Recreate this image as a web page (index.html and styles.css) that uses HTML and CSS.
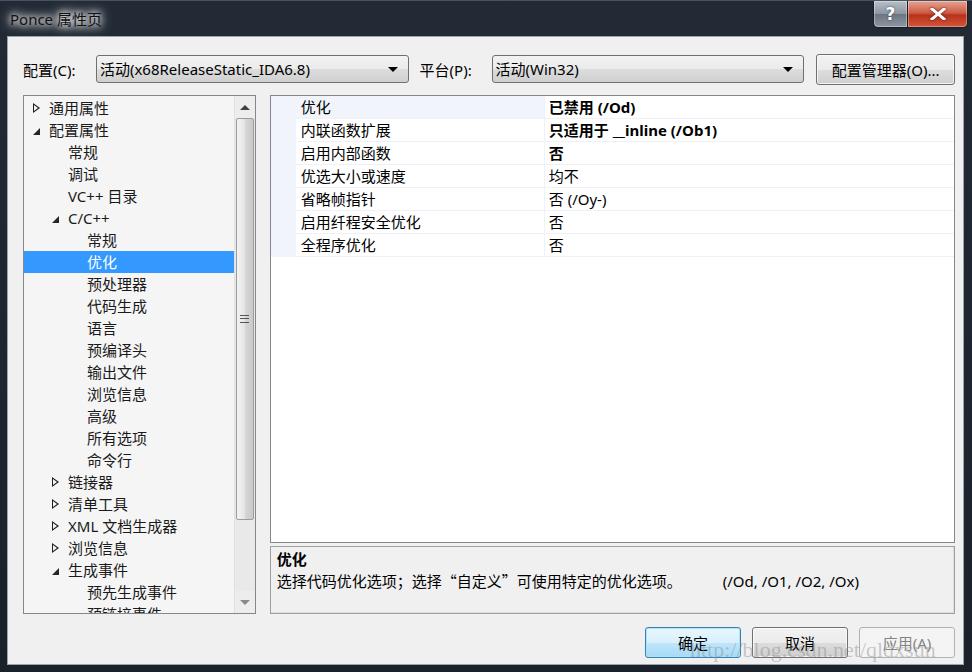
FILE: index.html
```html
<!DOCTYPE html>
<html lang="zh-CN">
<head>
  <meta charset="UTF-8" />
  <title>Ponce 属性页</title>
  <link rel="stylesheet" href="styles.css">
</head>
<body>
  <div class="window">
    <div class="titlebar">
      <span class="title">Ponce 属性页</span>
      <div class="caption-btns">
        <span class="cap help">?</span>
        <span class="cap close">
          <svg width="16" height="12" viewBox="0 0 16 12"><path d="M2 1 L14 11 M14 1 L2 11" stroke="#fff" stroke-width="3" stroke-linecap="square"/></svg>
        </span>
      </div>
    </div>

    <div class="client">
      <div class="toolbar">
        <label class="field-label">配置(C):</label>
        <div class="combo">活动(x68ReleaseStatic_IDA6.8)<span class="combo-arrow"></span></div>
        <label class="field-label platform">平台(P):</label>
        <div class="combo">活动(Win32)<span class="combo-arrow"></span></div>
        <button class="btn manager">配置管理器(O)...</button>
      </div>

      <div class="main">
        <div class="tree">
          <div class="tree-items">
            <div class="node lv0"><span class="tw closed"></span>通用属性</div>
            <div class="node lv0"><span class="tw open"></span>配置属性</div>
            <div class="node lv1"><span class="tw"></span>常规</div>
            <div class="node lv1"><span class="tw"></span>调试</div>
            <div class="node lv1"><span class="tw"></span>VC++ 目录</div>
            <div class="node lv1"><span class="tw open"></span>C/C++</div>
            <div class="node lv2"><span class="tw"></span>常规</div>
            <div class="node lv2 selected"><span class="tw"></span>优化</div>
            <div class="node lv2"><span class="tw"></span>预处理器</div>
            <div class="node lv2"><span class="tw"></span>代码生成</div>
            <div class="node lv2"><span class="tw"></span>语言</div>
            <div class="node lv2"><span class="tw"></span>预编译头</div>
            <div class="node lv2"><span class="tw"></span>输出文件</div>
            <div class="node lv2"><span class="tw"></span>浏览信息</div>
            <div class="node lv2"><span class="tw"></span>高级</div>
            <div class="node lv2"><span class="tw"></span>所有选项</div>
            <div class="node lv2"><span class="tw"></span>命令行</div>
            <div class="node lv1"><span class="tw closed"></span>链接器</div>
            <div class="node lv1"><span class="tw closed"></span>清单工具</div>
            <div class="node lv1"><span class="tw closed"></span>XML 文档生成器</div>
            <div class="node lv1"><span class="tw closed"></span>浏览信息</div>
            <div class="node lv1"><span class="tw open"></span>生成事件</div>
            <div class="node lv2"><span class="tw"></span>预先生成事件</div>
            <div class="node lv2"><span class="tw"></span>预链接事件</div>
          </div>
          <div class="scrollbar">
            <div class="sb-btn"><span class="sb-up"></span></div>
            <div class="sb-track">
              <div class="sb-thumb"><span class="grip"></span></div>
            </div>
            <div class="sb-btn"><span class="sb-down"></span></div>
          </div>
        </div>

        <div class="right">
          <div class="grid">
            <div class="row first"><span class="margin"></span><span class="name">优化</span><span class="value bold">已禁用 (/Od)</span></div>
            <div class="row"><span class="margin"></span><span class="name">内联函数扩展</span><span class="value bold">只适用于 __inline (/Ob1)</span></div>
            <div class="row"><span class="margin"></span><span class="name">启用内部函数</span><span class="value bold">否</span></div>
            <div class="row"><span class="margin"></span><span class="name">优选大小或速度</span><span class="value">均不</span></div>
            <div class="row"><span class="margin"></span><span class="name">省略帧指针</span><span class="value">否 (/Oy-)</span></div>
            <div class="row"><span class="margin"></span><span class="name">启用纤程安全优化</span><span class="value">否</span></div>
            <div class="row"><span class="margin"></span><span class="name">全程序优化</span><span class="value">否</span></div>
          </div>
          <div class="desc">
            <div class="desc-title">优化</div>
            <div class="desc-text"><span class="desc-main">选择代码优化选项；选择<span class="cjk">“</span>自定义<span class="cjk">”</span>可使用特定的优化选项。</span><span>(/Od, /O1, /O2, /Ox)</span></div>
          </div>
        </div>
      </div>

      <div class="footer">
        <button class="btn default">确定</button>
        <button class="btn">取消</button>
        <button class="btn disabled">应用(A)</button>
      </div>
    </div>

    <div class="watermark">http://blog.csdn.net/qldxsun</div>
  </div>
</body>
</html>
```

FILE: styles.css
```css
* {
  box-sizing: border-box;
}
body {
  margin: 0;
  background: #1d232d;
  font-family: "Noto Sans", "Noto Sans CJK SC", sans-serif;
  font-size: 14px;
  color: #000;
}
.window {
  position: relative;
  width: 972px;
  height: 672px;
  background: linear-gradient(180deg, #222a35 0%, #1b212b 100%);
  border-top: 1px solid #4a525e;
  overflow: hidden;
}
.titlebar {
  height: 36px;
  display: flex;
  align-items: flex-start;
  justify-content: space-between;
}
.title {
  margin: 8px 0 0 10px;
  font-size: 15px;
  line-height: 20px;
  color: #111;
  padding: 0 6px 0 0;
  text-shadow: 0 0 6px #fff, 0 0 10px #fff, 0 0 14px rgba(255, 255, 255, 0.9);
}
.caption-btns {
  display: flex;
  margin-right: 4px;
}
.cap {
  height: 27px;
  display: flex;
  align-items: center;
  justify-content: center;
  border: 1px solid #1a1d22;
  border-top: none;
  box-shadow: inset 0 0 0 1px rgba(255, 255, 255, 0.35);
}
.help {
  width: 35px;
  border-radius: 0 0 0 5px;
  background: linear-gradient(180deg, #b8bfc8 0%, #8d96a2 48%, #6c7582 52%, #8e98a4 100%);
  color: #fff;
  font-family: "DejaVu Sans", sans-serif;
  font-weight: bold;
  font-size: 17px;
  text-shadow: 0 0 2px #333;
}
.close {
  width: 60px;
  border-left: none;
  border-radius: 0 0 5px 0;
  background: linear-gradient(180deg, #e5a493 0%, #cf5c45 45%, #b8321c 55%, #d4553a 100%);
}
.close svg {
  filter: drop-shadow(0 0 1px #4a1208);
}
.client {
  width: 955px;
  height: 627px;
  margin-left: 8px;
  background: #f0f0f0;
  box-shadow: 0 0 0 1px #9aa4b0;
  padding: 17px 8px 0 15px;
  display: flex;
  flex-direction: column;
}
.toolbar {
  height: 30px;
  display: flex;
  align-items: center;
}
.field-label {
  width: 73px;
  font-size: 15px;
}
.field-label.platform {
  width: 72px;
  margin-left: 11px;
}
.combo {
  position: relative;
  width: 313px;
  height: 28px;
  border: 1px solid #707070;
  border-radius: 3px;
  background: linear-gradient(180deg, #f2f2f2 0%, #ebebeb 50%, #dddddd 51%, #cfcfcf 100%);
  font-size: 15px;
  line-height: 26px;
  padding-left: 3px;
}
.combo-arrow {
  position: absolute;
  right: 10px;
  top: 11px;
  width: 0;
  height: 0;
  border-left: 5px solid transparent;
  border-right: 5px solid transparent;
  border-top: 5px solid #000;
}
.btn {
  height: 31px;
  width: 97px;
  border: 1px solid #707070;
  border-radius: 3px;
  background: linear-gradient(180deg, #f2f2f2 0%, #ebebeb 50%, #dddddd 51%, #cfcfcf 100%);
  box-shadow: inset 0 0 0 1px rgba(255, 255, 255, 0.7);
  font-family: inherit;
  font-size: 15px;
  color: #000;
  padding: 0;
}
.btn.manager {
  width: 139px;
  margin-left: 12px;
}
.main {
  display: flex;
  gap: 14px;
  margin-top: 11px;
  height: 519px;
}
.tree {
  width: 233px;
  border: 1px solid #828790;
  background: #f5f5f5;
  display: flex;
  overflow: hidden;
}
.tree-items {
  flex: 1;
  padding-top: 1px;
  overflow: hidden;
}
.node {
  height: 22px;
  line-height: 22px;
  font-size: 15px;
  display: flex;
  align-items: center;
  white-space: nowrap;
  color: #1a1a1a;
}
.node.lv0 { padding-left: 8px; }
.node.lv1 { padding-left: 27px; }
.node.lv2 { padding-left: 46px; }
.node.selected {
  background: #3399ff;
  color: #fff;
}
.tw {
  width: 17px;
  height: 22px;
  flex: none;
  position: relative;
}
.tw.closed::before {
  content: "";
  position: absolute;
  left: 1px;
  top: 6px;
  width: 0;
  height: 0;
  border-top: 5px solid transparent;
  border-bottom: 5px solid transparent;
  border-left: 7px solid #1f1f1f;
}
.tw.closed::after {
  content: "";
  position: absolute;
  left: 2px;
  top: 8px;
  width: 0;
  height: 0;
  border-top: 3px solid transparent;
  border-bottom: 3px solid transparent;
  border-left: 4px solid #f5f5f5;
}
.tw.open::before {
  content: "";
  position: absolute;
  left: 1px;
  top: 9px;
  width: 0;
  height: 0;
  border-left: 7px solid transparent;
  border-bottom: 7px solid #262626;
}
.scrollbar {
  width: 21px;
  flex: none;
  background: #e9e9e9;
  border-left: 1px solid #e0e0e0;
  display: flex;
  flex-direction: column;
}
.sb-btn {
  height: 22px;
  display: flex;
  align-items: center;
  justify-content: center;
  background: #ededed;
}
.sb-up {
  border-left: 5px solid transparent;
  border-right: 5px solid transparent;
  border-bottom: 5px solid #404040;
}
.sb-down {
  border-left: 5px solid transparent;
  border-right: 5px solid transparent;
  border-top: 5px solid #8a8a8a;
}
.sb-track {
  flex: 1;
  padding: 0 1px;
}
.sb-thumb {
  height: 402px;
  border: 1px solid #9c9c9c;
  border-radius: 2px;
  background: linear-gradient(90deg, #f3f3f3 0%, #e6e6e6 45%, #d4d4d4 55%, #c9c9c9 100%);
  display: flex;
  align-items: center;
  justify-content: center;
}
.grip {
  width: 9px;
  height: 8px;
  border-top: 1px solid #555;
  border-bottom: 1px solid #555;
  position: relative;
}
.grip::after {
  content: "";
  position: absolute;
  left: 0;
  right: 0;
  top: 2px;
  border-top: 1px solid #555;
}
.right {
  width: 686px;
  display: flex;
  flex-direction: column;
  gap: 3px;
}
.grid {
  height: 448px;
  border: 1px solid #828790;
  background: #fff;
}
.row {
  height: 23px;
  display: flex;
  font-size: 15px;
  line-height: 23px;
}
.margin {
  width: 25px;
  background: #f1f5fb;
  flex: none;
}
.name {
  width: 249px;
  padding-left: 5px;
  border-right: 1px solid #eef2f8;
  border-bottom: 1px solid #eef2f8;
  flex: none;
  white-space: nowrap;
}
.row.first .name {
  background: #f1f5fb;
}
.value {
  flex: 1;
  padding-left: 4px;
  border-bottom: 1px solid #eef2f8;
  white-space: nowrap;
}
.value.bold {
  font-weight: bold;
}
.desc {
  height: 68px;
  border: 1px solid #a0a0a0;
  box-shadow: inset -1px -1px 0 #dcdcdc;
  background: #f0f0f0;
  padding: 2px 6px;
}
.desc-title {
  font-weight: bold;
  font-size: 15px;
  line-height: 20px;
}
.desc-text {
  font-size: 15px;
  line-height: 24px;
  white-space: nowrap;
}
.desc-main {
  display: inline-block;
  width: 446px;
}
.cjk {
  font-family: "Noto Sans CJK SC", sans-serif;
}
.footer {
  display: flex;
  gap: 11px;
  margin-top: 13px;
  padding-left: 622px;
}
.btn.default {
  border-color: #3c7fb1;
  background: linear-gradient(180deg, #eaf6fd 0%, #d9f0fc 50%, #bee6fd 51%, #a7d9f5 100%);
  box-shadow: inset 0 0 0 1px #a8e5fb;
}
.btn.disabled {
  border-color: #adb2b5;
  background: #f4f4f4;
  color: #838383;
  box-shadow: none;
}
.watermark {
  position: absolute;
  left: 690px;
  top: 636px;
  font-family: "Liberation Serif", serif;
  font-size: 22px;
  color: rgba(140, 140, 140, 0.45);
  pointer-events: none;
  white-space: nowrap;
}
```
